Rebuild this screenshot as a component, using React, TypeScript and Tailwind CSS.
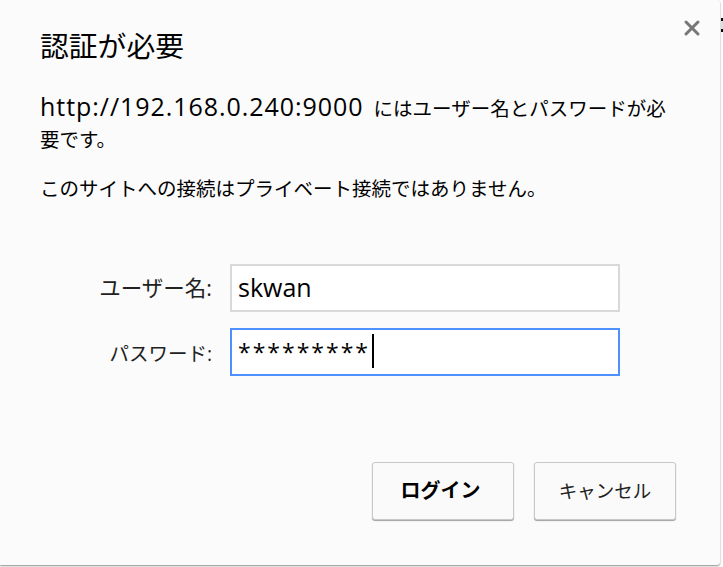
import { X } from "lucide-react";

const fontStack = '"Open Sans", "Noto Sans CJK JP", sans-serif';

export default function App() {
  return (
    <div className="relative h-[567px] w-[723px] overflow-hidden bg-white" style={{ fontFamily: fontStack }}>
      {/* sliver of the page behind the dialog */}
      <div className="absolute left-[721px] top-[18px] h-[14px] w-[2px] border-y-[3px] border-black bg-[#d5e3ee]" />

      <div className="relative flex h-[565px] w-[720px] flex-col rounded-br-[3px] rounded-tr-[3px] bg-[#fbfbfb] pl-10 shadow-[0_1px_2px_#8a8a8a]">
        <button type="button" className="absolute right-4 top-4 text-[#777777]">
          <X size={24} strokeWidth={3} />
        </button>

        <h1 className="mt-[26px] text-[28.8px] leading-[40px] text-black">認証が必要</h1>

        <p className="mt-[27px] w-[630px] text-[19.5px] leading-[31px] text-black">
          <span className="mr-[5px] text-[25px] leading-none tracking-[0.95px]">http://192.168.0.240:9000</span> にはユーザー名とパスワードが必要です。
        </p>
        <p className="mt-[18px] text-[19.5px] leading-[32px] text-black">このサイトへの接続はプライベート接続ではありません。</p>

        <div className="mt-[59px] flex flex-col gap-4">
          <div className="flex items-center">
            <label className="w-[190px] pr-[18px] text-right text-[21.5px] text-[#222222]">ユーザー名:</label>
            <div className="flex h-[48px] w-[390px] items-center border-2 border-[#d9d9d9] bg-white px-[6px] text-[25px] text-black">skwan</div>
          </div>
          <div className="flex items-center">
            <label className="w-[190px] pr-[18px] pt-1 text-right text-[19.5px] text-[#222222]">パスワード:</label>
            <div className="flex h-[48px] w-[390px] items-center border-2 border-[#4d90fe] bg-white px-[6px] text-[23px] tracking-[2px] text-black">
              *********
              <span className="mb-[2px] ml-[2px] h-[34px] w-[2px] bg-black" />
            </div>
          </div>
        </div>

        <div className="mt-[86px] flex justify-end gap-5 pr-11">
          <button type="button" className="h-[58px] w-[142px] rounded-[3px] border border-[#c8c8c8] bg-[#fafafa] pr-[5px] text-[20px] font-bold text-black shadow-[0_1px_1px_#a0a0a0]">ログイン</button>
          <button type="button" className="h-[58px] w-[142px] rounded-[3px] border border-[#c8c8c8] bg-[#fafafa] text-[18.5px] text-[#222222] shadow-[0_1px_1px_#a0a0a0]">キャンセル</button>
        </div>
      </div>
    </div>
  );
}
